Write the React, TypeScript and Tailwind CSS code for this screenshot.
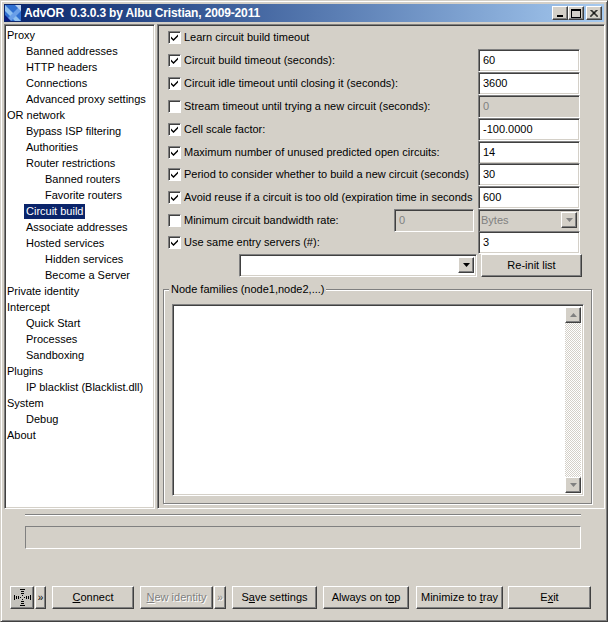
import { ReactNode } from 'react';

const SUNKEN = 'border border-t-[#808080] border-l-[#808080] border-b-white border-r-white shadow-[inset_1px_1px_0_#404040,inset_-1px_-1px_0_#d4d0c8]';
const RAISED = 'border border-t-white border-l-white border-b-[#404040] border-r-[#404040] shadow-[inset_-1px_-1px_0_#808080]';

const TREE: { label: string; level: number; selected?: boolean }[] = [
  { label: 'Proxy', level: 0 },
  { label: 'Banned addresses', level: 1 },
  { label: 'HTTP headers', level: 1 },
  { label: 'Connections', level: 1 },
  { label: 'Advanced proxy settings', level: 1 },
  { label: 'OR network', level: 0 },
  { label: 'Bypass ISP filtering', level: 1 },
  { label: 'Authorities', level: 1 },
  { label: 'Router restrictions', level: 1 },
  { label: 'Banned routers', level: 2 },
  { label: 'Favorite routers', level: 2 },
  { label: 'Circuit build', level: 1, selected: true },
  { label: 'Associate addresses', level: 1 },
  { label: 'Hosted services', level: 1 },
  { label: 'Hidden services', level: 2 },
  { label: 'Become a Server', level: 2 },
  { label: 'Private identity', level: 0 },
  { label: 'Intercept', level: 0 },
  { label: 'Quick Start', level: 1 },
  { label: 'Processes', level: 1 },
  { label: 'Sandboxing', level: 1 },
  { label: 'Plugins', level: 0 },
  { label: 'IP blacklist (Blacklist.dll)', level: 1 },
  { label: 'System', level: 0 },
  { label: 'Debug', level: 1 },
  { label: 'About', level: 0 },
];

function TreeRow({ label, level, selected }: { label: string; level: number; selected?: boolean }) {
  const indent = level === 0 ? 'pl-px' : level === 1 ? 'pl-5' : 'pl-[39px]';
  return (
    <div className={`h-4 flex items-center ${indent}`}>
      <span className={selected ? 'h-[15px] px-0.5 -ml-0.5 flex items-center bg-[#0a246a] text-white' : ''}>{label}</span>
    </div>
  );
}

function Check({ checked, label }: { checked: boolean; label: string }) {
  return (
    <div className="flex items-center min-w-0 whitespace-nowrap">
      <span className="w-[13px] h-[13px] shrink-0 bg-white border border-t-[#808080] border-l-[#808080] border-b-white border-r-white shadow-[inset_1px_1px_0_#404040] flex items-center justify-center">
        {checked && (
          <svg width="9" height="9" viewBox="0 0 9 9" className="block">
            <path d="M1 3.5 L3.5 6 L8 1.5 V3.5 L3.5 8 L1 5.5 Z" fill="#000" />
          </svg>
        )}
      </span>
      <span className="ml-[3px]">{label}</span>
    </div>
  );
}

function Field({ value, disabled, className = 'w-[102px]' }: { value: string; disabled?: boolean; className?: string }) {
  return (
    <div className={`${className} h-[23px] shrink-0 ${SUNKEN} ${disabled ? 'bg-[#d4d0c8] text-[#808080]' : 'bg-white'} flex items-center pl-1`}>
      {value}
    </div>
  );
}

function Row({ checked, label, value, disabled, short }: { checked: boolean; label: string; value: string; disabled?: boolean; short?: boolean }) {
  return (
    <div className={`${short ? 'h-[22px]' : 'h-[23px]'} flex items-center justify-between`}>
      <Check checked={checked} label={label} />
      <Field value={value} disabled={disabled} />
    </div>
  );
}

function ArrowBox({ className = '', color = '#000' }: { className?: string; color?: string }) {
  return (
    <span className={`w-4 h-4 shrink-0 bg-[#d4d0c8] ${RAISED} flex items-center justify-center ${className}`}>
      <svg width="7" height="4" viewBox="0 0 7 4" className="block">
        <path d="M0 0 H7 L3.5 4 Z" fill={color} />
      </svg>
    </span>
  );
}

function Btn({ className, disabled, children }: { className: string; disabled?: boolean; children: ReactNode }) {
  return (
    <div
      className={`h-[23px] shrink-0 ${RAISED} flex items-center justify-center whitespace-pre ${disabled ? 'text-[#808080] [text-shadow:1px_1px_0_#fff]' : ''} ${className}`}
    >
      {children}
    </div>
  );
}

function WinButton({ children, className = '' }: { children: ReactNode; className?: string }) {
  return (
    <div className={`w-4 h-[14px] bg-[#d4d0c8] ${RAISED} flex items-center justify-center ${className}`}>
      {children}
    </div>
  );
}

function AppIcon() {
  return (
    <svg width="16" height="16" viewBox="0 0 16 16" className="block shrink-0">
      <rect width="16" height="16" fill="#2f6fd0" />
      <path d="M0 0 L16 16 H10 L0 6 Z" fill="#8fc0f0" />
      <path d="M16 0 L0 16 H6 L16 6 Z" fill="#6a9fe8" />
      <path d="M0 10 L6 16 H0 Z" fill="#0a1a80" />
      <path d="M10 0 H16 V6 Z" fill="#b8d0f0" />
    </svg>
  );
}

function ConnectIcon() {
  return (
    <svg width="19" height="19" viewBox="0 0 19 19" className="block" shapeRendering="crispEdges">
      <path d="M7 1.5h5M8 3.5h3M8 5.5h3M9 7.5h1M9 11.5h1M8 13.5h3M8 15.5h3M7 17.5h5" stroke="#000" strokeWidth="1" />
      <path d="M1.5 7v5M3.5 8v3M5.5 8v3M7.5 9v1M11.5 9v1M13.5 8v3M15.5 8v3M17.5 7v5" stroke="#000" strokeWidth="1" />
    </svg>
  );
}

export default function App() {
  return (
    <div
      className="w-[608px] h-[622px] bg-[#d4d0c8] text-black text-[11px] leading-none overflow-hidden flex flex-col border border-t-[#d4d0c8] border-l-[#d4d0c8] border-b-[#404040] border-r-[#404040] shadow-[inset_1px_1px_0_#fff,inset_-1px_-1px_0_#808080] p-1"
      style={{ fontFamily: '"Liberation Sans", Arial, sans-serif' }}
    >
      <div className="h-[18px] shrink-0 -mx-px -mt-px flex items-center pl-px pr-0.5 bg-gradient-to-r from-[#0a246a] to-[#a6caf0]">
        <AppIcon />
        <span className="ml-[3px] text-white font-bold text-[12px] tracking-[-0.15px] whitespace-pre">
          AdvOR  0.3.0.3 by Albu Cristian, 2009-2011
        </span>
        <div className="ml-auto flex items-center">
          <WinButton>
            <span className="w-1.5 h-0.5 bg-black mt-1.5" />
          </WinButton>
          <WinButton>
            <span className="w-[10px] h-[9px] border border-black border-t-2" />
          </WinButton>
          <WinButton className="ml-0.5">
            <svg width="8" height="7" viewBox="0 0 8 7" className="block">
              <path d="M0.5 0 L7.5 7 M7.5 0 L0.5 7 M1.5 0 L8 6.5 M6.5 0 L0 6.5" stroke="#000" strokeWidth="1" />
            </svg>
          </WinButton>
        </div>
      </div>

      <div className="flex h-[485px] shrink-0 mt-[2px]">
        <div className={`w-[151px] shrink-0 -ml-px bg-white ${SUNKEN} pt-[2px] pl-[1px]`}>
          {TREE.map((t) => (
            <TreeRow key={t.label} label={t.label} level={t.level} selected={t.selected} />
          ))}
        </div>

        <div className={`flex-1 ml-0.5 -mr-0.5 ${SUNKEN} bg-[#d4d0c8] pl-[10px] pr-[24px] pt-[1px]`}>
          <div className="h-[23px] flex items-center">
            <Check checked label="Learn circuit build timeout" />
          </div>
          <Row checked label="Circuit build timeout (seconds):" value="60" />
          <Row checked label="Circuit idle timeout until closing it (seconds):" value="3600" />
          <Row checked={false} label="Stream timeout until trying a new circuit (seconds):" value="0" disabled />
          <Row checked label="Cell scale factor:" value="-100.0000" />
          <Row short checked label="Maximum number of unused predicted open circuits:" value="14" />
          <Row checked label="Period to consider whether to build a new circuit (seconds)" value="30" />
          <Row checked label="Avoid reuse if a circuit is too old (expiration time in seconds" value="600" />
          <div className="h-[22px] flex items-center">
            <Check checked={false} label="Minimum circuit bandwidth rate:" />
            <Field value="0" disabled className="w-[80px] ml-auto" />
            <div className={`w-[102px] h-[23px] ml-1 ${SUNKEN} flex items-center pl-[2px] pr-0.5 text-[#808080]`}>
              Bytes
              <ArrowBox className="ml-auto" color="#808080" />
            </div>
          </div>
          <Row checked label="Use same entry servers (#):" value="3" />
          <div className="h-[22px] flex items-center">
            <div className={`w-[238px] h-[23px] ml-[71px] bg-white ${SUNKEN} flex items-center justify-end pr-0.5`}>
              <ArrowBox />
            </div>
            <Btn className="w-[101px] ml-auto -mr-[2px]">Re-init list</Btn>
          </div>

          <div className="relative mt-[13px] -ml-[5px] -mr-[12px] h-[215px] border border-[#808080] shadow-[1px_1px_0_#fff,inset_1px_1px_0_#fff] pl-[8px] pr-[7px] pt-[14px] pb-[7px]">
            <span className="absolute -top-[6px] left-[5px] bg-[#d4d0c8] px-[2px]">Node families (node1,node2,...)</span>
            <div className={`h-full bg-white ${SUNKEN} flex justify-end p-0.5`}>
              <div className="w-4 h-full flex flex-col bg-[repeating-conic-gradient(#fff_0_25%,#d4d0c8_0_50%)] bg-[length:2px_2px]">
                <span className={`h-4 w-4 shrink-0 bg-[#d4d0c8] ${RAISED} flex items-center justify-center`}>
                  <svg width="7" height="4" viewBox="0 0 7 4" className="block">
                    <path d="M3.5 0 L7 4 H0 Z" fill="#808080" />
                  </svg>
                </span>
                <span className={`h-4 w-4 shrink-0 mt-auto bg-[#d4d0c8] ${RAISED} flex items-center justify-center`}>
                  <svg width="7" height="4" viewBox="0 0 7 4" className="block">
                    <path d="M0 0 H7 L3.5 4 Z" fill="#808080" />
                  </svg>
                </span>
              </div>
            </div>
          </div>
        </div>
      </div>

      <div className="ml-[20px] w-[556px] mt-[5px] h-0.5 shrink-0 border-t border-t-[#808080] border-b border-b-white" />
      <div className="ml-[20px] w-[556px] mt-[10px] h-[23px] shrink-0 border border-t-[#808080] border-l-[#808080] border-b-white border-r-white" />

      <div className="flex items-center mt-[37px] ml-[5px] text-[11px]">
        <div className={`w-6 h-[23px] shrink-0 ${RAISED} bg-[#c4c2bc] flex items-center justify-center`}>
          <ConnectIcon />
        </div>
        <Btn className="w-[11px] ml-px text-[10px]">»</Btn>
        <Btn className="w-[82px] ml-[6px]">
          <u>C</u>onnect
        </Btn>
        <Btn disabled className="w-[73px] ml-[6px]">
          <u>N</u>ew identity
        </Btn>
        <Btn disabled className="w-[12px] ml-px text-[10px]">»</Btn>
        <Btn className="w-[85px] ml-[6px]">
          S<u>a</u>ve settings
        </Btn>
        <Btn className="w-[86px] ml-[6px]">
          Always on t<u>o</u>p
        </Btn>
        <Btn className="w-[87px] ml-[7px]">
          {'Minimize to '}<u>t</u>ray
        </Btn>
        <Btn className="w-[83px] ml-[5px]">
          E<u>x</u>it
        </Btn>
      </div>
    </div>
  );
}
